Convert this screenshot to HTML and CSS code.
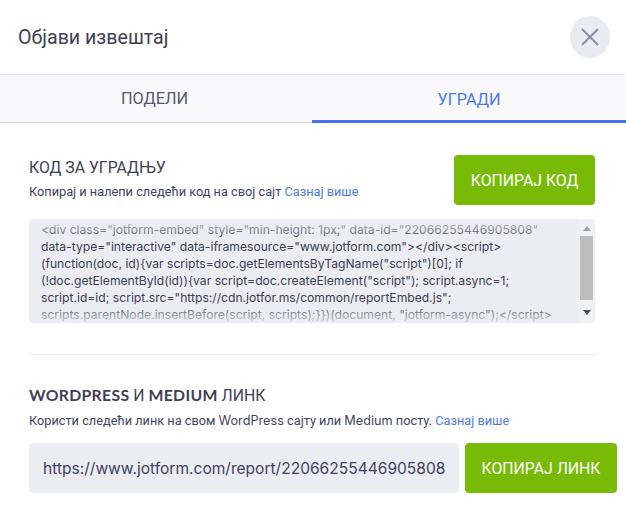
FILE: index.html
```html
<!DOCTYPE html>
<html lang="sr">
<head>
<meta charset="utf-8">
<title>Објави извештај</title>
<link rel="stylesheet" href="styles.css">
</head>
<body>
<header class="head">
  <h1 class="title">Објави извештај</h1>
  <button class="close" aria-label="Затвори">
    <svg viewBox="0 0 20 20" width="20" height="20"><path d="M2 2 L18 18 M18 2 L2 18" fill="none" stroke="#8d8ea8" stroke-width="2"/></svg>
  </button>
</header>
<nav class="tabs">
  <div class="tab tab-share">ПОДЕЛИ</div>
  <div class="tab tab-active">УГРАДИ</div>
</nav>
<main class="content">
  <section class="embed">
    <div class="embed-top">
      <div class="embed-text">
        <h2 class="sec-title">КОД ЗА УГРАДЊУ</h2>
        <p class="sec-desc">Копирај и налепи следећи код на свој сајт <a class="more">Сазнај више</a></p>
      </div>
      <button class="btn btn-code">КОПИРАЈ КОД</button>
    </div>
    <div class="code">
      <div class="code-text">&lt;div class="jotform-embed" style="min-height: 1px;" data-id="22066255446905808" data-type="interactive" data-iframesource="www.jotform.com"&gt;&lt;/div&gt;&lt;script&gt; (function(doc, id){var scripts=doc.getElementsByTagName("script")[0]; if (!doc.getElementById(id)){var script=doc.createElement("script"); script.async=1; script.id=id; script.src="https://cdn.jotfor.ms/common/reportEmbed.js"; scripts.parentNode.insertBefore(script, scripts);}})(document, "jotform-async");&lt;/script&gt;</div>
      <div class="fade fade-top"></div>
      <div class="fade fade-bottom"></div>
      <div class="scroll">
        <svg class="arrow" viewBox="0 0 8 5" width="8" height="5"><path d="M4 0 L8 5 L0 5 Z" fill="#a3a3a3"/></svg>
        <div class="thumb"></div>
        <svg class="arrow arrow-down" viewBox="0 0 8 5" width="8" height="5"><path d="M0 0 L8 0 L4 5 Z" fill="#505050"/></svg>
      </div>
    </div>
  </section>
  <hr class="rule">
  <section class="link">
    <h2 class="sec-title"><b class="brand">WORDPRESS</b> И <b class="brand">MEDIUM</b> ЛИНК</h2>
    <p class="sec-desc">Користи следећи линк на свом <span class="latin">WordPress</span> сајту или <span class="latin">Medium</span> посту. <a class="more">Сазнај више</a></p>
    <div class="link-row">
      <div class="url">https://www.jotform.com/report/22066255446905808</div>
      <button class="btn btn-link">КОПИРАЈ ЛИНК</button>
    </div>
  </section>
</main>
</body>
</html>
```
FILE: styles.css
```css
* { box-sizing: border-box; }
html, body { margin: 0; padding: 0; }
body { width: 626px; height: 524px; overflow: hidden; background: #fff; font-family: Roboto, "Liberation Sans", sans-serif; color: #2c3345; }
.head { height: 75px; display: flex; align-items: center; justify-content: space-between; padding: 0 16px 0 18px; border-bottom: 1px solid #e8e8f0; }
.title { margin: 0; font-size: 19.6px; font-weight: 400; color: #3d4152; }
.close { width: 40px; height: 42px; border: 0; padding: 0; border-radius: 50%; background: #eaeaf3; display: flex; align-items: center; justify-content: center; }
.tabs { height: 48px; display: flex; background: #f9f9fb; border-bottom: 1px solid #dcdce8; }
.tab { display: flex; align-items: center; justify-content: center; font-size: 16.3px; color: #55586a; }
.tab-share { flex: 0 0 309px; margin-right: 3px; }
.tab-active { flex: 1; color: #4c78ee; box-shadow: inset 0 -3px 0 #4273ec; height: 48px; }
.content { padding: 32px 31px 0 29px; }
.embed-top { display: flex; justify-content: space-between; align-items: flex-start; }
.embed-text { padding-top: 3px; }
.sec-title { margin: 0; font-size: 15.8px; font-weight: 400; color: #3d4152; line-height: 20px; }
.sec-desc { margin: 6px 0 0; font-size: 12.75px; line-height: 16px; color: #3f4360; }
.more { color: #4c78ee; }
.btn { border: 0; border-radius: 4px; background: #78bb07; color: #fff; font-family: Roboto, "Liberation Sans", sans-serif; padding: 0; }
.btn-code { width: 141px; height: 50px; font-size: 15.8px; }
.code { position: relative; margin-top: 14px; height: 104px; background: #ecedf3; border-radius: 4px; overflow: hidden; padding: 2px 14px 0 12px; }
.code-text { width: 530px; font-family: Inter, "Liberation Sans", sans-serif; font-size: 12.15px; line-height: 17px; color: #3b3f50; }
.fade { position: absolute; left: 0; right: 0; height: 16px; pointer-events: none; }
.fade-top { top: 0; background: linear-gradient(rgba(236,237,243,.85), rgba(236,237,243,.2)); }
.fade-bottom { bottom: 0; height: 16px; background: linear-gradient(rgba(236,237,243,.2), rgba(236,237,243,.8)); }
.scroll { position: absolute; top: 0; right: 0; bottom: 0; width: 17px; background: rgba(240,240,243,.8); display: flex; flex-direction: column; align-items: center; padding: 7px 0 8px; }
.thumb { width: 13px; height: 64px; margin-top: 5px; background: #bdbdbd; }
.arrow-down { margin-top: auto; }
.rule { margin: 31px -1px 0 0; border: 0; border-top: 1px solid #ebebf2; }
.link { margin-top: 30px; }
.brand { font-family: Lato, Inter, sans-serif; font-weight: 700; letter-spacing: .3px; }
.link .sec-desc { margin-top: 7px; }
.latin { font-family: Inter, sans-serif; font-size: 12.7px; }
.link-row { display: flex; gap: 6px; margin-top: 14px; width: 588px; }
.url { flex: 1; height: 50px; background: #ecedf3; border-radius: 4px; display: flex; align-items: center; padding-left: 14px; font-family: Inter, sans-serif; font-size: 15.55px; color: #3f4360; white-space: nowrap; }
.btn-link { width: 152px; height: 50px; flex: none; font-size: 15.8px; }
```
